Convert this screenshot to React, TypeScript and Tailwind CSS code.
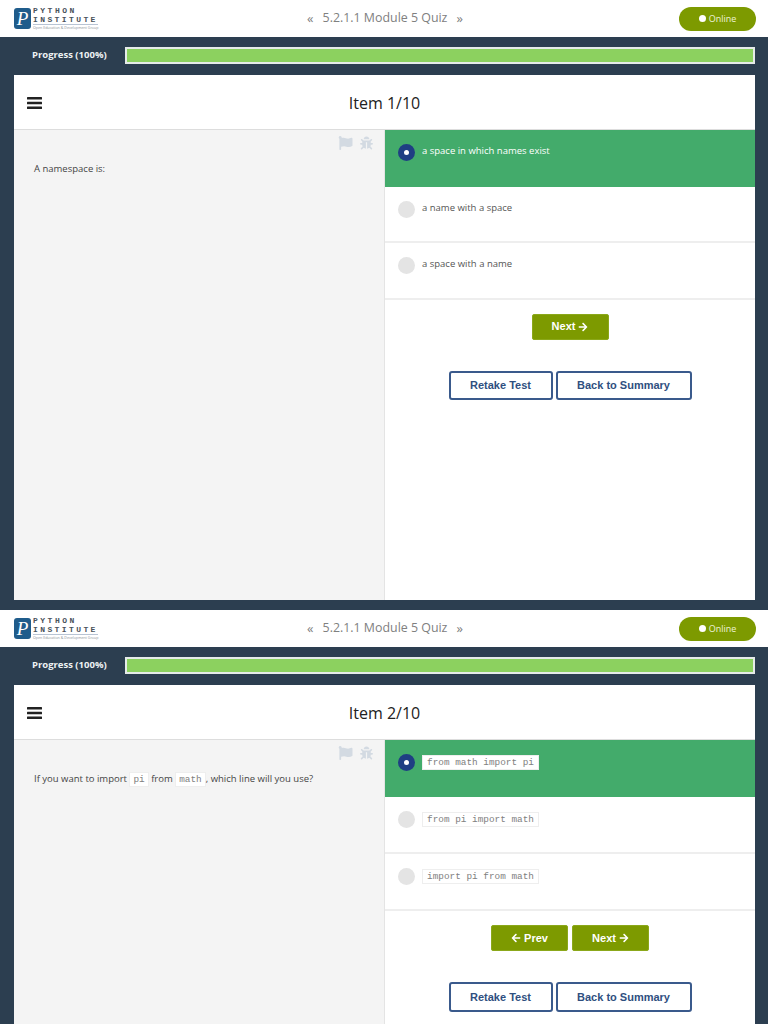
import React from 'react';
import { FaArrowLeft, FaArrowRight, FaBug, FaFlag } from 'react-icons/fa';

interface Option {
  text: string;
  code?: boolean;
}

interface ScreenProps {
  item: string;
  options: Option[];
  question: React.ReactNode;
  hasPrev?: boolean;
}

const Code = ({ children, inline }: { children: React.ReactNode; inline?: boolean }) => (
  <code className={`bg-white border border-[#eeeeee] font-['Liberation_Mono',monospace] text-[9.4px] leading-[13px] text-[#808080] inline-block ${inline ? 'px-[3px]' : 'px-[4px] mt-[1px]'}`}>
    {children}
  </code>
);

const Logo = () => (
  <div className="flex items-center gap-[2px]">
    <div className="w-[17px] h-[21px] rounded-[3px] bg-[#1f5c8b] flex items-center justify-center text-white font-['Liberation_Serif',serif] italic text-[19px] leading-none">
      P
    </div>
    <div className="flex flex-col font-['Liberation_Mono',monospace] text-[#4a525b] leading-none">
      <span className="text-[8px] leading-[8px] font-bold tracking-[2.5px]">PYTHON</span>
      <span className="text-[8px] leading-[9px] font-bold tracking-[2.4px] border-b border-[#b8c4d4]">INSTITUTE</span>
      <span className="text-[3.6px] leading-[6px] text-[#8a929a] font-['Open_Sans',sans-serif] whitespace-nowrap">Open Education &amp; Development Group</span>
    </div>
  </div>
);

const NavButton = ({ children }: { children: React.ReactNode }) => (
  <button className="w-[77px] h-[26px] bg-[#7d9a00] rounded-[2px] border border-[#8ba81a] text-white text-[11px] font-bold font-['Liberation_Sans',sans-serif] flex items-center justify-center gap-[3px]">
    {children}
  </button>
);

const OutlineButton = ({ label, width }: { label: string; width: string }) => (
  <button className={`${width} h-[29.5px] bg-white border-2 border-[#3a5a8c] rounded-[3px] text-[#2f4f80] text-[11px] font-bold font-['Liberation_Sans',sans-serif]`}>
    {label}
  </button>
);

const Screen: React.FC<ScreenProps> = ({ item, options, question, hasPrev }) => (
  <div className="h-[610px] flex flex-col bg-[#2c3e50] font-['Open_Sans',sans-serif]">
    <header className="h-[37px] shrink-0 bg-white flex items-center justify-between pl-[14px] pr-[12px]">
      <div className="w-[130px]">
        <Logo />
      </div>
      <div className="flex items-center gap-[9px] text-[12.4px] text-[#808080]">
        <span className="text-[13px] leading-none">«</span>
        <span>5.2.1.1 Module 5 Quiz</span>
        <span className="text-[13px] leading-none">»</span>
      </div>
      <div className="w-[130px] flex justify-end">
        <div className="w-[77px] h-[24px] rounded-full bg-[#7d9a00] flex items-center justify-center gap-[3px] text-[9px] text-[#eef3d8]">
          <span className="w-[7px] h-[7px] rounded-full bg-white" />
          Online
        </div>
      </div>
    </header>

    <div className="h-[38px] shrink-0 flex items-center pl-[32px] pr-[13px] pb-[1px]">
      <span className="w-[93px] text-[9.5px] font-bold text-[#eef2f4]">Progress (100%)</span>
      <div className="flex-1 h-[17px] bg-[#8cd15f] border-2 border-[#e6ebe9]" />
    </div>

    <div className="flex-1 min-h-0 ml-[14px] mr-[13px] mb-[10px] bg-white flex flex-col">
      <div className="h-[55px] shrink-0 relative flex items-center justify-center pt-[1px] border-b border-[#dddddd]">
        <svg className="absolute left-[13px] top-[22px] text-[#222222]" width="15" height="12" viewBox="0 0 15 12" fill="currentColor">
          <rect width="15" height="2.6" rx="0.5" />
          <rect y="4.7" width="15" height="2.6" rx="0.5" />
          <rect y="9.4" width="15" height="2.6" rx="0.5" />
        </svg>
        <span className="text-[16px] text-[#222222]">{item}</span>
      </div>
      <div className="flex-1 flex min-h-0">
        <div className="w-[371px] shrink-0 bg-[#f4f4f4] border-r border-[#e4e4e4] pl-[20px] pr-[11px] pt-[6px]">
          <div className="flex justify-end gap-[7px] text-[#d3dae2]">
            <FaFlag className="w-[15px] h-[14px]" />
            <FaBug className="w-[13px] h-[14px]" />
          </div>
          <div className="mt-[12px] text-[9.5px] leading-[14px] text-[#444444]">{question}</div>
        </div>
        <div className="flex-1 min-w-0 flex flex-col">
          {options.map((option, i) => (
            <div
              key={option.text}
              className={`${option.code ? 'h-[57px]' : 'h-[56.5px]'} shrink-0 flex items-start gap-[7px] pl-[13px] pt-[14px] border-b-2 ${i === 0 ? 'bg-[#43ab6b] border-[#43ab6b]' : 'bg-white border-[#eeeeee]'}`}
            >
              {i === 0 ? (
                <span className="w-[17px] h-[17px] rounded-full bg-[#1f3f83] flex items-center justify-center">
                  <span className="w-[5px] h-[5px] rounded-full bg-white" />
                </span>
              ) : (
                <span className="w-[17px] h-[17px] rounded-full bg-[#e4e4e4]" />
              )}
              {option.code ? (
                <Code>{option.text}</Code>
              ) : (
                <span className={`text-[9.5px] leading-[14px] ${i === 0 ? 'text-white' : 'text-[#555555]'}`}>{option.text}</span>
              )}
            </div>
          ))}
          <div className="flex justify-center gap-[4px] mt-[14px]">
            {hasPrev && (
              <NavButton>
                <FaArrowLeft className="w-[10px] h-[10px]" /> Prev
              </NavButton>
            )}
            <NavButton>
              Next <FaArrowRight className="w-[10px] h-[10px]" />
            </NavButton>
          </div>
          <div className="flex justify-center gap-[3px] mt-[31px]">
            <OutlineButton label="Retake Test" width="w-[104px]" />
            <OutlineButton label="Back to Summary" width="w-[136px]" />
          </div>
        </div>
      </div>
    </div>
  </div>
);

export default function App() {
  return (
    <div className="h-[1024px] overflow-hidden">
      <Screen
        item="Item 1/10"
        question="A namespace is:"
        options={[{ text: 'a space in which names exist' }, { text: 'a name with a space' }, { text: 'a space with a name' }]}
      />
      <Screen
        item="Item 2/10"
        hasPrev
        question={
          <>
            If you want to import <Code inline>pi</Code> from <Code inline>math</Code>, which line will you use?
          </>
        }
        options={[
          { text: 'from math import pi', code: true },
          { text: 'from pi import math', code: true },
          { text: 'import pi from math', code: true },
        ]}
      />
    </div>
  );
}
